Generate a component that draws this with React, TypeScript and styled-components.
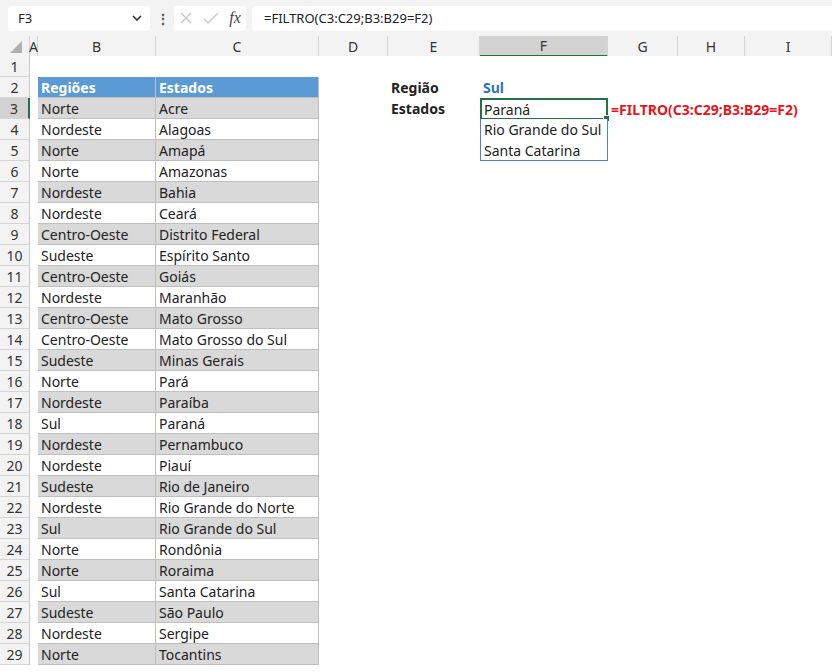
import React from "react";
import styled, { createGlobalStyle } from "styled-components";

const Global = createGlobalStyle`
  body { margin: 0; background: #fff; font-family: "Noto Sans", "Open Sans", sans-serif; }
`;

const COLS = "30px 8px 118px 163px 69px 92px 128px 70px 67px 1fr";

const Toolbar = styled.div`
  height: 36px; background: #f3f3f3; display: flex; align-items: center; gap: 6px; padding: 0 0 0 8px; box-sizing: border-box;
`;
const NameBox = styled.div`
  width: 142px; height: 25px; background: #fff; border-radius: 4px; display: flex; align-items: center; justify-content: space-between;
  padding: 0 8px 0 10px; box-sizing: border-box; font-size: 13px; color: #222;
`;
const Dots = styled.div` width: 12px; text-align: center; color: #555; font-size: 14px; font-weight: bold;`;
const FxBox = styled.div`
  width: 72px; height: 25px; background: #fff; border-radius: 4px; display: flex; align-items: center; justify-content: space-around; color: #bbb;
`;
const Formula = styled.div`
  flex: 1; height: 25px; background: #fff; border-radius: 4px 0 0 4px; display: flex; align-items: center; padding-left: 12px; font-size: 13px; color: #222;
`;
const Row = styled.div<{ $h: number }>`
  display: grid; grid-template-columns: ${COLS}; height: ${p => p.$h}px;
`;
const ColHead = styled.div<{ $sel?: boolean }>`
  background: ${p => (p.$sel ? "#d2d2d2" : "#f3f3f3")}; border-right: 1px solid #d4d4d4; border-bottom: ${p => (p.$sel ? "2px solid #217346" : "1px solid #c8c8c8")};
  display: flex; align-items: center; justify-content: center; font-size: 14px; color: #333; box-sizing: border-box;
`;
const RowHead = styled.div<{ $sel?: boolean }>`
  background: ${p => (p.$sel ? "#d2d2d2" : "#f3f3f3")}; border-bottom: 1px solid #d4d4d4; border-right: ${p => (p.$sel ? "2px solid #217346" : "1px solid #c8c8c8")};
  display: flex; align-items: center; justify-content: center; font-size: 14px; color: #333; box-sizing: border-box;
`;
const Cell = styled.div<{ $bg?: string; $grid?: boolean; $bold?: boolean; $color?: string }>`
  background: ${p => p.$bg || "#fff"}; box-sizing: border-box; padding-left: 3px;
  border-right: 1px solid ${p => (p.$grid ? "#bfbfbf" : "transparent")}; border-bottom: 1px solid ${p => (p.$grid ? "#bfbfbf" : "transparent")};
  display: flex; align-items: center; font-size: 14px; white-space: nowrap; overflow: visible;
  font-weight: ${p => (p.$bold ? 700 : 400)}; color: ${p => p.$color || "#222"};
`;
const Spill = styled(Cell)<{ $pos: "top" | "mid" | "bot" }>`
  position: relative; border: 1px solid #4a86c0; border-top: ${p => (p.$pos === "top" ? "1px solid #4a86c0" : "none")};
  border-bottom: ${p => (p.$pos === "bot" ? "1px solid #4a86c0" : "none")};
`;
const Active = styled.div`
  position: absolute; inset: -1px; border: 2px solid #217346; pointer-events: none;
  &::after { content: ""; position: absolute; right: -4px; bottom: -4px; width: 5px; height: 5px; background: #217346; border: 1px solid #fff; }
`;
const Note = styled.span`
  position: absolute; left: 100%; margin-left: 4px; color: #e8151b; font-weight: 700; font-size: 14px;
`;

const data: [string, string][] = [
  ["Norte","Acre"],["Nordeste","Alagoas"],["Norte","Amapá"],["Norte","Amazonas"],["Nordeste","Bahia"],["Nordeste","Ceará"],
  ["Centro-Oeste","Distrito Federal"],["Sudeste","Espírito Santo"],["Centro-Oeste","Goiás"],["Nordeste","Maranhão"],
  ["Centro-Oeste","Mato Grosso"],["Centro-Oeste","Mato Grosso do Sul"],["Sudeste","Minas Gerais"],["Norte","Pará"],
  ["Nordeste","Paraíba"],["Sul","Paraná"],["Nordeste","Pernambuco"],["Nordeste","Piauí"],["Sudeste","Rio de Janeiro"],
  ["Nordeste","Rio Grande do Norte"],["Sul","Rio Grande do Sul"],["Norte","Rondônia"],["Norte","Roraima"],
  ["Sul","Santa Catarina"],["Sudeste","São Paulo"],["Nordeste","Sergipe"],["Norte","Tocantins"],
];

const letters = ["A","B","C","D","E","F","G","H","I"];

export default function App() {
  const rows = [];
  for (let r = 1; r <= 29; r++) {
    const d = r >= 3 ? data[r - 3] : null;
    const bg = d ? ((r - 3) % 2 === 0 ? "#d9d9d9" : "#fff") : undefined;
    let e: React.ReactNode = <Cell />;
    let f: React.ReactNode = <Cell />;
    if (r === 2) { e = <Cell $bold>Região</Cell>; f = <Cell $bold $color="#2e75b6">Sul</Cell>; }
    if (r === 3) { e = <Cell $bold>Estados</Cell>; f = <Spill $pos="top">Paraná<Active /><Note>=FILTRO(C3:C29;B3:B29=F2)</Note></Spill>; }
    if (r === 4) f = <Spill $pos="mid">Rio Grande do Sul</Spill>;
    if (r === 5) f = <Spill $pos="bot">Santa Catarina</Spill>;
    rows.push(
      <Row key={r} $h={21}>
        <RowHead $sel={r === 3}>{r}</RowHead>
        <Cell />
        {r === 2 ? <Cell $bg="#5b9bd5" $bold $color="#fff" $grid>Regiões</Cell> : d ? <Cell $bg={bg} $grid>{d[0]}</Cell> : <Cell />}
        {r === 2 ? <Cell $bg="#5b9bd5" $bold $color="#fff" $grid>Estados</Cell> : d ? <Cell $bg={bg} $grid>{d[1]}</Cell> : <Cell />}
        <Cell />{e}{f}<Cell /><Cell /><Cell />
      </Row>
    );
  }
  return (
    <>
      <Global />
      <Toolbar>
        <NameBox>F3
          <svg width="10" height="6" viewBox="0 0 10 6"><path d="M1 1l4 4 4-4" stroke="#333" strokeWidth="1.6" fill="none" /></svg>
        </NameBox>
        <Dots>⋮</Dots>
        <FxBox>
          <svg width="14" height="14" viewBox="0 0 14 14"><path d="M2 2l10 10M12 2L2 12" stroke="#c4c4c4" strokeWidth="1.2" /></svg>
          <svg width="16" height="14" viewBox="0 0 16 14"><path d="M1 8l4 4 10-10" stroke="#c4c4c4" strokeWidth="1.2" fill="none" /></svg>
          <span style={{ fontFamily: "Liberation Serif, serif", fontStyle: "italic", color: "#444", fontSize: 16 }}>fx</span>
        </FxBox>
        <Formula>=FILTRO(C3:C29;B3:B29=F2)</Formula>
      </Toolbar>
      <Row $h={20}>
        <ColHead>
          <svg width="14" height="14" viewBox="0 0 14 14"><path d="M14 2L14 14 2 14z" fill="#b0b0b0" /></svg>
        </ColHead>
        {letters.map(l => <ColHead key={l} $sel={l === "F"}>{l}</ColHead>)}
      </Row>
      {rows}
    </>
  );
}
